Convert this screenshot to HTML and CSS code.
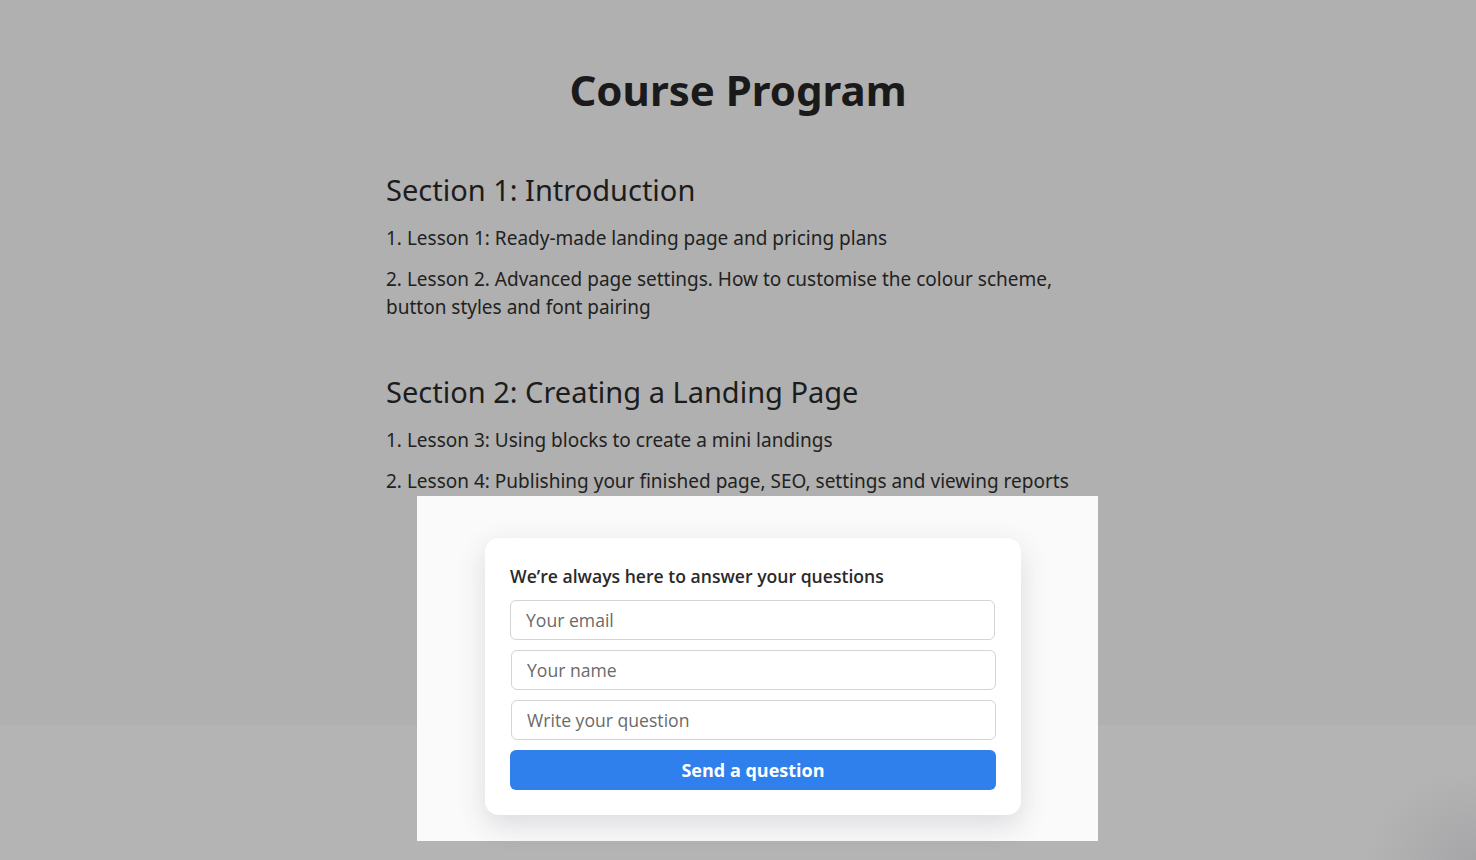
FILE: index.html
```html
<!DOCTYPE html>
<html lang="en">
<head>
<meta charset="utf-8">
<title>Course Program</title>
<link rel="stylesheet" href="styles.css">
</head>
<body>
<main class="program">
  <h1 class="program-title">Course Program</h1>
  <section class="section">
    <h2 class="section-title">Section 1: Introduction</h2>
    <p class="lesson">1. Lesson 1: Ready-made landing page and pricing plans</p>
    <p class="lesson">2. Lesson 2. Advanced page settings. How to customise the colour scheme, button styles and font pairing</p>
  </section>
  <section class="section">
    <h2 class="section-title">Section 2: Creating a Landing Page</h2>
    <p class="lesson">1. Lesson 3: Using blocks to create a mini landings</p>
    <p class="lesson">2. Lesson 4: Publishing your finished page, SEO, settings and viewing reports</p>
  </section>
</main>
<div class="popup">
  <form class="question-card">
    <p class="question-title">We’re always here to answer your questions</p>
    <input class="field" type="email" placeholder="Your email">
    <input class="field field-shift" type="text" placeholder="Your name">
    <input class="field field-shift" type="text" placeholder="Write your question">
    <button class="send-btn" type="button">Send a question</button>
  </form>
</div>
</body>
</html>
```
FILE: styles.css
```css
html, body {
  margin: 0;
  padding: 0;
}
body {
  width: 1476px;
  height: 860px;
  overflow: hidden;
  position: relative;
  background:
    radial-gradient(ellipse 110px 90px at 100% 100%, rgba(130,130,140,0.28) 0, rgba(150,150,150,0) 100%),
    linear-gradient(to bottom, #b0b0b0 725px, #b4b4b4 725px);
  font-family: "Noto Sans", "Open Sans", sans-serif;
  color: #1c1c1c;
}
.program {
  width: 704px;
  margin: 0 auto;
  padding-top: 60px;
}
.program-title {
  margin: 0 0 50px;
  text-align: center;
  font-size: 42px;
  line-height: 60px;
  font-weight: 700;
  color: #1a1a1a;
}
.section {
  margin-bottom: 51px;
}
.section-title {
  margin: 0 0 14px;
  font-size: 29px;
  line-height: 40px;
  font-weight: 400;
  color: #1c1c1c;
}
.lesson {
  margin: 0 0 13px;
  font-size: 19px;
  line-height: 28px;
  color: #222;
}
.popup {
  position: absolute;
  left: 417px;
  top: 496px;
  width: 681px;
  height: 345px;
  background: #fafafa;
  box-sizing: border-box;
  padding: 42px 0 0 68px;
}
.question-card {
  width: 536px;
  box-sizing: border-box;
  padding: 27px 25px 25px;
  background: #fff;
  border-radius: 14px;
  box-shadow: 0 10px 28px rgba(60, 60, 90, 0.16);
  display: flex;
  flex-direction: column;
  gap: 10px;
  font-family: "Open Sans", "Noto Sans", sans-serif;
}
.question-title {
  margin: 0 0 3px;
  font-size: 17.6px;
  line-height: 22px;
  color: #2a2a2a;
  font-weight: 600;
}
.field {
  width: 485px;
  height: 40px;
  box-sizing: border-box;
  border: 1px solid #d3d3da;
  border-radius: 6px;
  padding: 0 15px;
  font-family: inherit;
  font-size: 17.6px;
  color: #333;
  background: #fff;
  outline: none;
}
.field::placeholder {
  color: #6a6a6a;
}
.field-shift {
  margin-left: 1px;
}
.send-btn {
  width: 486px;
  height: 40px;
  border: none;
  border-radius: 6px;
  background: #2f80ed;
  color: #fff;
  font-family: inherit;
  font-size: 18px;
  font-weight: 700;
  cursor: pointer;
}
```
